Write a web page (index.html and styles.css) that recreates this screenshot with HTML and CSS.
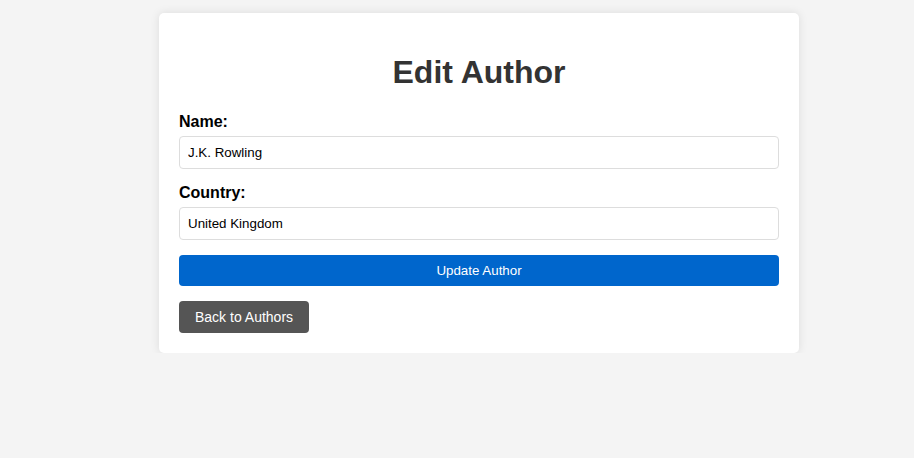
FILE: index.html
```html
<!DOCTYPE html>
<html lang="en">
<head>
<meta charset="utf-8">
<title>Edit Author</title>
<link rel="stylesheet" href="styles.css">
</head>
<body>
<div class="container">
  <h1 class="title">Edit Author</h1>
  <form class="form">
    <label class="label" for="name">Name:</label>
    <input class="input" id="name" type="text" value="J.K. Rowling">
    <label class="label" for="country">Country:</label>
    <input class="input" id="country" type="text" value="United Kingdom">
    <button class="submit" type="button">Update Author</button>
  </form>
  <a class="back" href="#">Back to Authors</a>
</div>
</body>
</html>
```

FILE: styles.css
```css
html, body {
  margin: 0;
  padding: 0;
}
body {
  background: #f4f4f4;
  font-family: "Liberation Sans", Arial, sans-serif;
  padding: 13px 0 0 159px;
}
.container {
  width: 600px;
  padding: 20px;
  background: #fff;
  border-radius: 5px;
  box-shadow: 0 0 10px rgba(0, 0, 0, 0.1);
}
.title {
  font-size: 32px;
  font-weight: bold;
  color: #333;
  text-align: center;
  margin: 21.44px 0;
}
.form {
  margin: 0;
}
.label {
  display: block;
  font-size: 16px;
  font-weight: bold;
  color: #000;
  margin-bottom: 5px;
}
.input {
  display: block;
  box-sizing: border-box;
  width: 100%;
  padding: 8px;
  margin: 0 0 15px;
  border: 1px solid #ddd;
  border-radius: 4px;
  font-family: "Liberation Sans", Arial, sans-serif;
  font-size: 13.333px;
  color: #000;
}
.submit {
  display: block;
  width: 100%;
  padding: 8px;
  border: none;
  border-radius: 4px;
  background: #0066cc;
  color: #fff;
  font-family: "Liberation Sans", Arial, sans-serif;
  font-size: 13.333px;
  margin: 0 0 15px;
}
.back {
  display: inline-block;
  padding: 8px 16px;
  background: #555;
  color: #fff;
  text-decoration: none;
  border-radius: 4px;
  font-size: 14px;
  vertical-align: top;
}
```
